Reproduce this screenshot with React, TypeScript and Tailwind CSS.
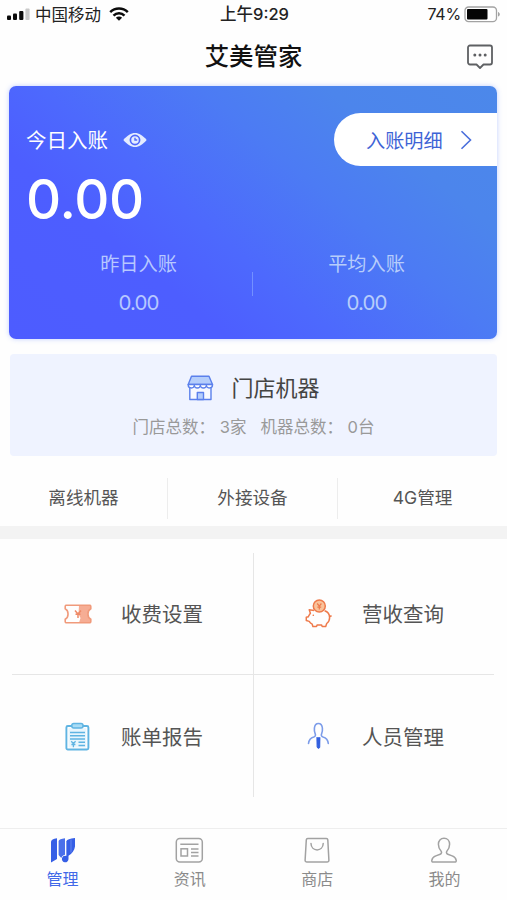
import React from 'react';

interface MenuItem {
  id: number;
  title: string;
  icon: React.ReactNode;
}

const SignalIcon = () => (
  <svg width="24" height="14" viewBox="0 0 24 14" className="ml-[7px]">
    <rect x="0" y="8.5" width="4" height="4.5" rx="1" fill="#0b0b0b" />
    <rect x="6" y="6.5" width="4" height="6.5" rx="1" fill="#0b0b0b" />
    <rect x="12.2" y="4" width="4.2" height="9" rx="1" fill="#0b0b0b" />
    <rect x="18.4" y="1.5" width="4.2" height="11.5" rx="1" fill="#c9c9c9" />
  </svg>
);

const WifiIcon = () => (
  <svg width="20" height="14" viewBox="0 0 20 14" className="ml-[8px]">
    <g fill="none" stroke="#0b0b0b" strokeWidth="2.5">
      <path d="M1.200 5.200a12.600 12.600 0 0 1 17.600 0" />
      <path d="M4.500 8.600a7.900 7.900 0 0 1 11 0" />
    </g>
    <path d="M6.900 10.800a4.400 4.400 0 0 1 6.200 0L10 13.800z" fill="#0b0b0b" />
  </svg>
);

const BatteryIcon = () => (
  <svg width="37" height="17" viewBox="0 0 37 17" className="ml-[3px]">
    <rect x="1" y="1" width="31.5" height="14.6" rx="3.6" fill="#fff" stroke="#a3a3a3" strokeWidth="1.3" />
    <rect x="3" y="3" width="20.5" height="10.6" rx="1" fill="#050505" />
    <path d="M34 6v4.600c1-.4 1.800-1.200 1.800-2.300S35 6.400 34 6z" fill="#a3a3a3" />
  </svg>
);

const MessageIcon = () => (
  <svg width="28" height="26" viewBox="0 0 28 26" fill="none">
    <path
      d="M4 1.500h20a2 2 0 0 1 2 2v15a2 2 0 0 1-2 2h-6.500L14 24 10.500 20.500H4a2 2 0 0 1-2-2V3.500a2 2 0 0 1 2-2z"
      stroke="#5e6063"
      strokeWidth="1.800"
      strokeLinejoin="round"
    />
    <circle cx="8.800" cy="11" r="1.500" fill="#5e6063" />
    <circle cx="14" cy="11" r="1.500" fill="#5e6063" />
    <circle cx="19.200" cy="11" r="1.500" fill="#5e6063" />
  </svg>
);

const EyeIcon = () => (
  <svg width="24" height="16" viewBox="0 0 24 16" className="ml-[15px]">
    <path
      d="M.3 8C4.500 3.200 8 1 12 1s7.500 2.200 11.700 7C19.500 12.800 16 15 12 15S4.500 12.800.3 8z"
      fill="#e4ecff"
    />
    <circle cx="12" cy="8" r="4.600" fill="none" stroke="#5068fb" strokeWidth="1.700" />
    <path d="M12 5.800V8h2.200" fill="none" stroke="#5068fb" strokeWidth="1.400" />
  </svg>
);

const StoreIcon = () => (
  <svg width="27" height="26" viewBox="0 0 27 26" stroke="#5b80ec" strokeWidth="1.400" strokeLinejoin="round">
    <path d="M2.800 11.500V24.500H24V11.500" fill="#f7f9ff" />
    <path d="M4.500 1.200H22L25.500 9.500H1.200z" fill="#b5cefb" />
    <path
      d="M1.200 9.500H25.500C25.800 13.800 19.900 14 19.400 10.500 19 13.800 13.800 13.800 13.350 10.500 12.900 13.800 7.700 13.800 7.300 10.500 6.800 14 .9 13.800 1.200 9.500z"
      fill="#fff"
    />
    <path d="M10.300 24.500v-7h6.200v7z" fill="#b5cefb" />
  </svg>
);

const TicketIcon = () => (
  <svg width="28" height="20" viewBox="0 0 28 20">
    <path d="M15 1.300h10.800c1.200 0 1 1 1 3.500-3.800 1.800-3.800 8.600 0 10.400 0 2.500.2 3.500-1 3.500H15l1.500-4.700-2-4z" fill="#f6ad94" />
    <path
      d="M2.200 1.300h23.600c1.200 0 1 1 1 3.500-3.800 1.800-3.800 8.600 0 10.400 0 2.500.2 3.500-1 3.500H2.200c-1.200 0-1-1-1-3.500 3.800-1.800 3.800-8.600 0-10.400 0-2.500-.2-3.500 1-3.500z"
      fill="none"
      stroke="#f09a7b"
      strokeWidth="1.600"
    />
    <path d="M11 6.500l3 3.500 3-3.500M14 10v4M11.500 10.300h5" fill="none" stroke="#ee8a68" strokeWidth="1.500" />
  </svg>
);

const PiggyIcon = () => (
  <svg width="28" height="29" viewBox="0 0 28 29" fill="none" stroke="#ee7a4b" strokeWidth="1.500" strokeLinejoin="round">
    <path d="M9 11.500L4.200 10.800l1.200 3.400C4.300 15.500 4 16.500 3.300 17.800l-2 .5v3.200l2.900.9c.8 1.300 1.700 2.100 3 2.800l.7 2.300h3.600l.7-1.600h4.300l.7 1.600h3.500l1-3c1.800-1.400 2.900-3.400 2.900-5.800 0-3.500-2-6-5-6.900" />
    <path d="M24.600 17.500l2-.8" />
    <circle cx="14.300" cy="7" r="6" fill="#f9c39b" />
    <path d="M12.200 4.500l2.100 2.600 2.100-2.600M14.300 7v3.600M12.400 8.200h3.800" strokeWidth="1.200" />
    <circle cx="8.300" cy="16.300" r=".8" fill="#ee6f3c" stroke="none" />
  </svg>
);

const ReportIcon = () => (
  <svg width="25" height="29" viewBox="0 0 25 29" fill="none" stroke="#5fb4e2" strokeWidth="1.500">
    <rect x="1.400" y="4" width="22" height="23.500" rx="1.500" strokeWidth="1.900" />
    <rect x="3.600" y="6.200" width="17.600" height="19.200" fill="#e8f6fd" stroke="none" />
    <rect x="6.800" y="1.500" width="11.200" height="4.600" rx="2" fill="#a9dcf5" />
    <path d="M5 10.500h15M5 13.700h15M5 17h15M13.500 20.300H20M13.500 23.500H20" />
    <path d="M6.200 19.300l2.200 2.200 2.200-2.200M8.400 21.300v4M6.400 22.500h4" strokeWidth="1.300" />
  </svg>
);

const StaffIcon = () => (
  <svg width="23" height="28" viewBox="0 0 23 28" fill="none" stroke="#7c9ce9" strokeWidth="1.600" strokeLinecap="round">
    <path d="M1.500 21.500c.4-3.800 2.300-5.700 5.300-6.500 1.600-.5 2-1.700 1.400-3.200C7.300 9.800 7.200 8 7.400 6c.3-2.700 1.800-4.500 4-4.500s3.700 1.800 4 4.500c.2 2 .1 3.800-.8 5.800-.6 1.500-.2 2.700 1.400 3.200 3 .8 4.900 2.700 5.300 6.500" />
    <path d="M9.900 15.500h3.200l-.2 9.700-1.400 1.600-1.400-1.600z" fill="#3360df" stroke="#3360df" strokeWidth=".6" />
  </svg>
);

const ManageIcon = () => (
  <svg width="26" height="27" viewBox="0 0 26 27" fill="#365fe6">
    <path d="M1 4.500c.3-1.500 2-2.500 6-3.200V22L1 25.500z" />
    <path d="M8.600 4c.5-1.500 2.500-2.300 6.400-2.800v16.500c-2 .6-3.300 1.800-3.700 3.400L8.600 18z" fill="#4a70ea" />
    <path d="M16.300 4.200c.8-1.600 3.500-2.600 8.700-3.200v8.500c-.5 4-3 7-6.500 9.300v3.200a3.300 3.300 0 1 1-2.200-3.100z" />
    <path d="M15.600 5v13" stroke="#fefefe" strokeWidth=".9" />
    <path d="M21 2.500v13" stroke="#6f8ff0" strokeWidth=".8" />
  </svg>
);

const NewsIcon = () => (
  <svg width="29" height="27" viewBox="0 0 29 27" fill="none" stroke="#a2a2a2" strokeWidth="1.500">
    <rect x="1.300" y="1.500" width="26" height="23.500" rx="3.500" />
    <path d="M5.300 7.300h18.200M16 12h7.500M16 15.500h7.500M16 19h7.500" />
    <rect x="6" y="11.800" width="6.500" height="7.200" />
  </svg>
);

const ShopIcon = () => (
  <svg width="26" height="27" viewBox="0 0 26 27" fill="none" stroke="#a2a2a2" strokeWidth="1.500" strokeLinecap="round">
    <path d="M3.800 1.500h18.500a1.500 1.500 0 0 1 1.500 1.400l1.100 20.300a1.800 1.800 0 0 1-1.800 1.900H2.900a1.800 1.800 0 0 1-1.800-1.900L2.300 2.900a1.500 1.500 0 0 1 1.500-1.400z" />
    <path d="M7 6.500c.2 8.500 12 8.500 12.200 0" />
  </svg>
);

const ProfileIcon = () => (
  <svg width="26" height="27" viewBox="0 0 26 27" fill="none" stroke="#a2a2a2" strokeWidth="1.500" strokeLinejoin="round">
    <path d="M13 1.300c3.500 0 5.600 2.600 5.600 6 0 3-1.100 5-2.600 6.600-.9 1-.7 2.800.8 3.300l4.400 1.700c2.400.9 3.600 2.100 4 4.400.2 1.200-.4 1.800-1.600 1.800H2.400c-1.200 0-1.800-.6-1.600-1.800.4-2.300 1.600-3.500 4-4.400l4.400-1.700c1.500-.5 1.700-2.300.8-3.300-1.500-1.600-2.600-3.600-2.600-6.600 0-3.400 2.100-6 5.600-6z" />
  </svg>
);

const App = () => {
  const quickLinks = ['离线机器', '外接设备', '4G管理'];

  const menuItems: MenuItem[] = [
    { id: 1, title: '收费设置', icon: <TicketIcon /> },
    { id: 2, title: '营收查询', icon: <PiggyIcon /> },
    { id: 3, title: '账单报告', icon: <ReportIcon /> },
    { id: 4, title: '人员管理', icon: <StaffIcon /> },
  ];

  const tabs: MenuItem[] = [
    { id: 1, title: '管理', icon: <ManageIcon /> },
    { id: 2, title: '资讯', icon: <NewsIcon /> },
    { id: 3, title: '商店', icon: <ShopIcon /> },
    { id: 4, title: '我的', icon: <ProfileIcon /> },
  ];

  return (
    <div className="flex h-[900px] w-[507px] flex-col overflow-hidden bg-[#fefefe] font-[Inter,'Noto_Sans_CJK_SC',sans-serif]">
      {/* Status bar */}
      <div className="grid h-7 grid-cols-[1fr_auto_1fr] items-center text-[16px] leading-7 text-[#222]">
        <div className="flex items-center">
          <SignalIcon />
          <span className="ml-1 pt-[2px] text-[16.500px] leading-[26px]">中国移动</span>
          <WifiIcon />
        </div>
        <span className="pt-px pl-[2px] text-[16.500px] leading-[27px] font-medium">上午9:29</span>
        <div className="flex items-center justify-end pr-[6px]">
          <span className="tracking-[-0.2px]">74%</span>
          <BatteryIcon />
        </div>
      </div>

      {/* Header */}
      <header className="grid h-[58px] grid-cols-[1fr_auto_1fr] items-center pr-[13px] pl-[13px]">
        <span />
        <h1 className="pb-[2px] text-[24.400px] leading-8 font-medium text-[#111]">艾美管家</h1>
        <button className="justify-self-end" aria-label="消息">
          <MessageIcon />
        </button>
      </header>

      {/* Income card */}
      <section className="mr-[10px] ml-[9px] h-[253px] shrink-0 rounded-[7px] bg-[linear-gradient(40deg,#4d5cff_0%,#4d5eff_28%,#4d69fd_42%,#4c7bf4_62%,#4c85ec_78%,#4c88ea_100%)] shadow-[0_0_5px_rgba(80,120,255,0.35)]">
        <div className="flex items-center justify-between pt-[27px]">
          <div className="flex items-center pl-[17px] text-white">
            <span className="pt-[3px] text-[20.500px] leading-[30px]">今日入账</span>
            <EyeIcon />
          </div>
          <button className="flex h-[53px] w-[163px] items-center rounded-l-full bg-white pl-8 text-[19.200px] text-[#3d63d6]">
            <span className="pt-[3px] leading-[30px]">入账明细</span>
            <svg width="13" height="22" viewBox="0 0 13 22" className="ml-[17px]" fill="none" stroke="#4a6fdc" strokeWidth="1.600">
              <path d="M1.500 2.200L10.500 11 1.500 19.800" />
            </svg>
          </button>
        </div>
        <div className="pl-[17px] text-[54.500px] leading-[66px] font-medium tracking-[-0.3px] text-white">0.00</div>
        <div className="mt-[16px] flex">
          <div className="flex flex-1 flex-col items-center pl-[16px] text-[#b7c8ff]">
            <span className="pt-px text-[19.200px] leading-[30px]">昨日入账</span>
            <span className="mt-[9px] text-[20.500px] leading-[30px] tracking-[-0.9px]">0.00</span>
          </div>
          <div className="mt-[24px] h-6 w-px bg-[#7390ff]" />
          <div className="flex flex-1 flex-col items-center pr-[17px] text-[#b7cdfb]">
            <span className="pt-px text-[19.200px] leading-[30px]">平均入账</span>
            <span className="mt-[9px] text-[20.500px] leading-[30px] tracking-[-0.9px]">0.00</span>
          </div>
        </div>
      </section>

      {/* Store summary */}
      <section className="mx-[10px] mt-[15px] flex h-[102px] shrink-0 flex-col items-center rounded-[4px] bg-[#eff3ff] pt-[18px]">
        <div className="flex items-center gap-[17px]">
          <StoreIcon />
          <span className="text-[22px] leading-8 text-[#444]">门店机器</span>
        </div>
        <div className="mt-[11px] flex gap-[14px] text-[16.500px] leading-6 text-[#999]">
          <span>门店总数： 3家</span>
          <span>机器总数： 0台</span>
        </div>
      </section>

      {/* Quick links */}
      <div className="flex h-[70px] shrink-0 items-center pt-[15px]">
        {quickLinks.map((link, index) => (
          <div
            key={link}
            className={`flex h-[41px] items-center justify-center text-[17.600px] text-[#555] ${
              index < 2 ? 'border-r border-[#ededed]' : ''
            } ${index === 0 ? 'w-[168px]' : index === 1 ? 'w-[170px]' : 'w-[169px]'}`}
          >
            {link}
          </div>
        ))}
      </div>

      <div className="h-[13px] shrink-0 bg-[#f3f3f3]" />

      {/* Menu */}
      <div className="mt-[14px] mr-[13px] ml-[12px] grid h-[244px] shrink-0 grid-cols-[242px_240px] grid-rows-2">
        {menuItems.map((item, index) => (
          <div
            key={item.id}
            className={`flex items-center border-[#e6e6e6] ${index % 2 === 0 ? 'border-r pl-[50px]' : 'pl-[49px]'} ${
              index < 2 ? 'border-b' : ''
            }`}
          >
            <div className="flex w-[31px] justify-center">{item.icon}</div>
            <span className="ml-[28px] pt-[4px] text-[20.500px] text-[#555]">{item.title}</span>
          </div>
        ))}
      </div>

      {/* Bottom tabs */}
      <nav className="mt-auto flex h-[72px] shrink-0 justify-between border-t border-[#eee] px-[38px]">
        {tabs.map((tab, index) => (
          <button key={tab.id} className="flex w-[49px] flex-col items-center pt-[8px]">
            {tab.icon}
            <span className={`mt-[3px] text-[16px] leading-6 ${index === 0 ? 'text-[#4169e8]' : 'text-[#8b8b8b]'}`}>
              {tab.title}
            </span>
          </button>
        ))}
      </nav>
    </div>
  );
};

export default App;
